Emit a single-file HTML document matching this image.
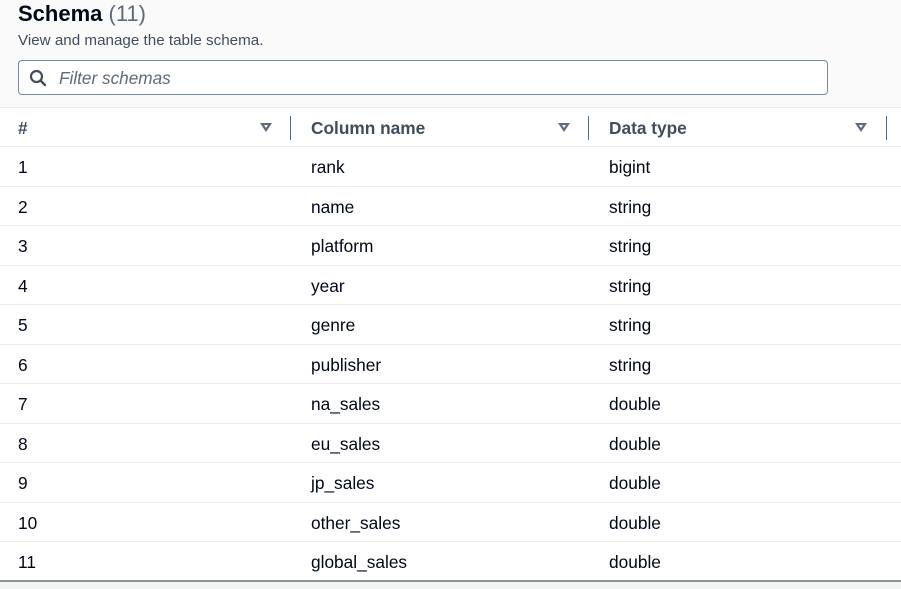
<!DOCTYPE html>
<html><head><meta charset="utf-8"><style>
*{margin:0;padding:0;box-sizing:border-box}
body{width:901px;height:589px;background:#f2f3f3;font-family:"Liberation Sans",sans-serif;color:#000716;position:relative;overflow:hidden}
.top{position:absolute;left:0;top:0;width:901px;height:108px;background:#fafafa;border-bottom:1px solid #e9ebed}
h1{position:absolute;left:18px;top:1px;font-size:22px;font-weight:bold;color:#000716}
h1 span{font-weight:normal;color:#5f6b7a}
.sub{position:absolute;left:18px;top:32px;font-size:15.2px;color:#414d5c}
.inp{position:absolute;left:18px;top:60px;width:810px;height:35px;border:1px solid #7d8998;border-radius:4px;background:#fff}
.inp svg{position:absolute;left:10px;top:8px}
.inp i{position:absolute;left:40px;top:7px;font-size:17.2px;color:#5f6b7a}
.tbl{position:absolute;left:0;top:108px;width:901px;height:474px;background:#fff;border-bottom:2px solid #879596}
.row{position:absolute;left:0;width:901px;height:39.5px;border-bottom:1px solid #e9ebed;font-size:17.3px}
.row div{position:absolute;top:10px}
.hd{font-weight:bold;color:#414d5c;height:39px}
.c1{left:18px}.c2{left:311px}.c3{left:609px}
.tri{position:absolute;top:15px;width:0;height:0;border-left:6px solid transparent;border-right:6px solid transparent;border-top:9px solid #5f6b7a}
.tri:after{content:"";position:absolute;left:-2px;top:-7px;border-left:2px solid transparent;border-right:2px solid transparent;border-top:3px solid #fff}
.dv{position:absolute;top:8px;width:1px;height:24px;background:#5f6b7a}
</style></head><body>
<div class="top">
<h1>Schema <span>(11)</span></h1>
<div class="sub">View and manage the table schema.</div>
<div class="inp"><svg width="18" height="18" viewBox="0 0 18 18"><circle cx="7.5" cy="7.5" r="5.5" fill="none" stroke="#414d5c" stroke-width="2.2"/><path d="M11.5 11.5L16 16" stroke="#414d5c" stroke-width="2.4" stroke-linecap="round"/></svg><i>Filter schemas</i></div>
</div>
<div class="tbl">
<div class="row hd" style="top:0"><div class="c1">#</div><div class="c2">Column name</div><div class="c3">Data type</div>
<span class="tri" style="left:260px"></span><span class="dv" style="left:290px"></span>
<span class="tri" style="left:558px"></span><span class="dv" style="left:588px"></span>
<span class="tri" style="left:855px"></span><span class="dv" style="left:886px"></span></div>
<div class="row" style="top:39px"><div class="c1">1</div><div class="c2">rank</div><div class="c3">bigint</div></div>
<div class="row" style="top:78.5px"><div class="c1">2</div><div class="c2">name</div><div class="c3">string</div></div>
<div class="row" style="top:118px"><div class="c1">3</div><div class="c2">platform</div><div class="c3">string</div></div>
<div class="row" style="top:157.5px"><div class="c1">4</div><div class="c2">year</div><div class="c3">string</div></div>
<div class="row" style="top:197px"><div class="c1">5</div><div class="c2">genre</div><div class="c3">string</div></div>
<div class="row" style="top:236.5px"><div class="c1">6</div><div class="c2">publisher</div><div class="c3">string</div></div>
<div class="row" style="top:276px"><div class="c1">7</div><div class="c2">na_sales</div><div class="c3">double</div></div>
<div class="row" style="top:315.5px"><div class="c1">8</div><div class="c2">eu_sales</div><div class="c3">double</div></div>
<div class="row" style="top:355px"><div class="c1">9</div><div class="c2">jp_sales</div><div class="c3">double</div></div>
<div class="row" style="top:394.5px"><div class="c1">10</div><div class="c2">other_sales</div><div class="c3">double</div></div>
<div class="row" style="top:434px;border-bottom:none"><div class="c1">11</div><div class="c2">global_sales</div><div class="c3">double</div></div>
</div>
</body></html>
